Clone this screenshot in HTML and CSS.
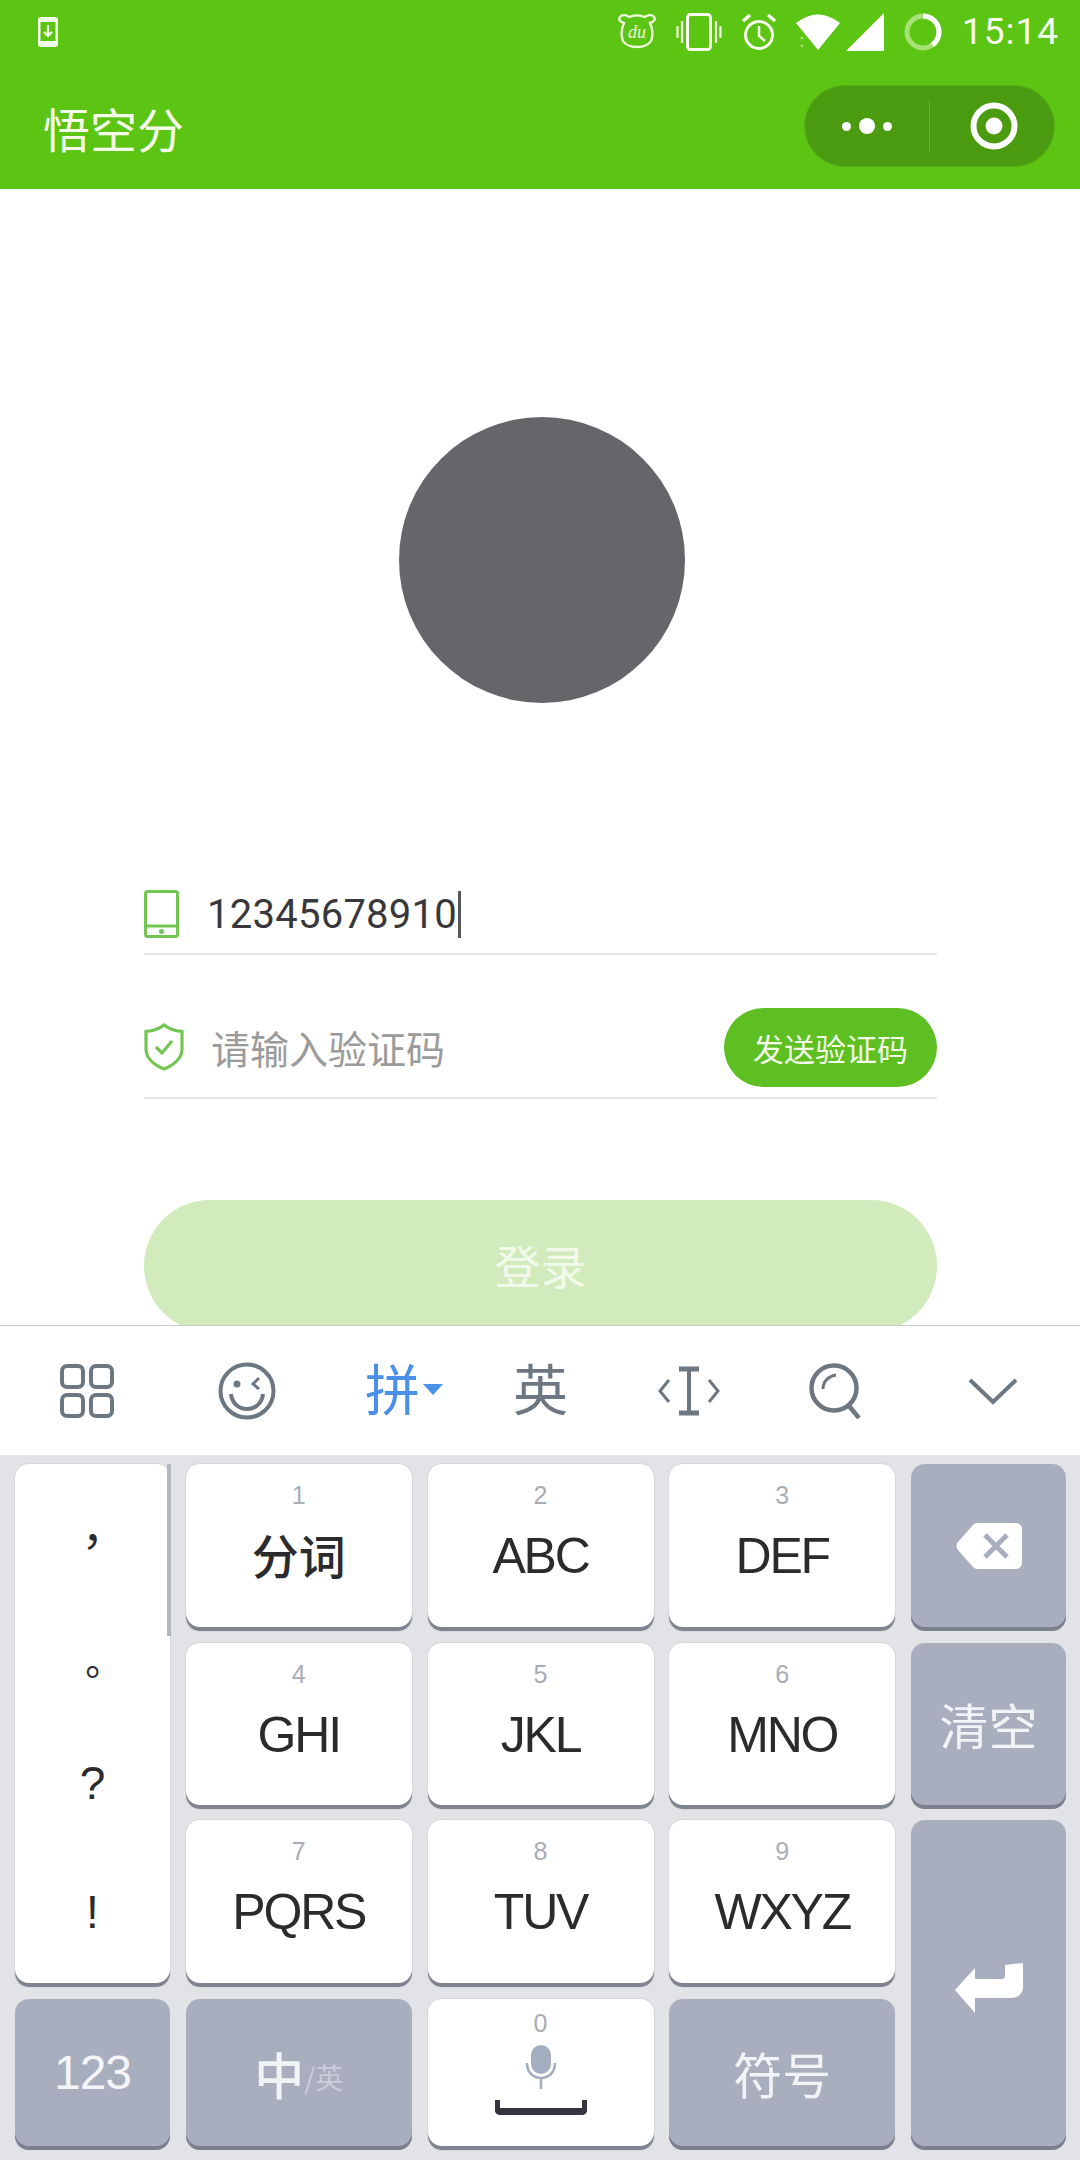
FILE: index.html
```html
<!DOCTYPE html>
<html lang="zh-CN">
<head>
  <meta charset="UTF-8" />
  <title>悟空分</title>
  <link rel="stylesheet" href="styles.css">
</head>
<body>
<div class="page">

  <!-- 顶部 -->
  <header class="header">
    <div class="status">
      <svg class="ic-download" width="20" height="30" viewBox="0 0 20 30">
        <rect width="20" height="30" rx="3" fill="#f4fbe9"/>
        <rect x="2.5" y="5" width="15" height="19" fill="#5cc412"/>
        <path d="M10 8v11M6 15l4 4 4-4" fill="none" stroke="#f4fbe9" stroke-width="2.2"/>
      </svg>
      <div class="status-right">
        <svg class="ic-du" width="40" height="36" viewBox="0 0 40 36">
          <path d="M7 10C3 9 1 6 3 4c2-3 7-2 9 0 5-2 11-2 16 0 2-2 7-3 9 0 2 2 0 5-4 6 3 6 3 14 1 18-3 5-9 6-14 6s-11-1-14-6C4 24 4 16 7 10z" fill="none" stroke="#eefadd" stroke-width="2.4"/>
          <text x="20" y="25" class="du-text">du</text>
        </svg>
        <svg class="ic-vibrate" width="46" height="38" viewBox="0 0 46 38">
          <rect x="11.500" y="1.500" width="23" height="35" rx="3" fill="none" stroke="#f6fcee" stroke-width="3"/>
          <path d="M1.500 13v12M6 8v22M40 8v22M44.500 13v12" stroke="#f0fae0" stroke-width="2.200"/>
        </svg>
        <svg class="ic-alarm" width="38" height="38" viewBox="0 0 38 38">
          <circle cx="19" cy="22" r="13.500" fill="none" stroke="#f6fcee" stroke-width="3"/>
          <path d="M19 13v10l6 5" fill="none" stroke="#f6fcee" stroke-width="2.500"/>
          <path d="M3 8l7-6M35 8l-7-6" stroke="#f6fcee" stroke-width="3.500"/>
        </svg>
        <svg class="ic-wifi" width="46" height="38" viewBox="0 0 46 38">
          <path d="M1 10Q23-7 45 10L23 37z" fill="#fff"/>
          <path d="M5 26l2-3 2 3zM5 32l2 3 2-3z" fill="#a9e07c"/>
        </svg>
        <svg class="ic-signal" width="38" height="38" viewBox="0 0 38 38">
          <path d="M0 38L38 0v38z" fill="#fff"/>
        </svg>
        <svg class="ic-ring" width="38" height="38" viewBox="0 0 38 38">
          <circle cx="19" cy="19" r="16" fill="none" stroke="#a6e076" stroke-width="5"/>
          <path d="M19 3a16 16 0 0 1 9.400 28.900" fill="none" stroke="#fff" stroke-width="5"/>
        </svg>
        <span class="time">15:14</span>
      </div>
    </div>
    <div class="nav">
      <span class="title">悟空分</span>
      <div class="capsule">
        <div class="capsule-left">
          <i class="dot"></i><i class="dot big"></i><i class="dot"></i>
        </div>
        <div class="capsule-right">
          <svg width="48" height="48" viewBox="0 0 48 48">
            <circle cx="24" cy="24" r="20.500" fill="none" stroke="#fff" stroke-width="6"/>
            <circle cx="24" cy="24" r="8.500" fill="#fff"/>
          </svg>
        </div>
      </div>
    </div>
  </header>

  <!-- 登录表单 -->
  <main class="main">
    <div class="avatar"></div>
    <div class="form">
      <div class="row row-phone">
        <svg class="row-icon" width="36" height="48" viewBox="0 0 36 48">
          <rect x="1.500" y="1.500" width="32" height="45" rx="2" fill="none" stroke="#72c551" stroke-width="3"/>
          <path d="M2 36h31" stroke="#72c551" stroke-width="3"/>
          <circle cx="17.500" cy="41.500" r="2.500" fill="#72c551"/>
        </svg>
        <span class="phone">12345678910</span><i class="caret"></i>
      </div>
      <div class="row row-code">
        <svg class="row-icon" width="40" height="48" viewBox="0 0 40 48">
          <path d="M20 2c5 4 11 6 18 6.500V26c0 9-8 16-18 20C10 42 2 35 2 26V8.500C9 8 15 6 20 2z" fill="none" stroke="#72c551" stroke-width="3.200"/>
          <path d="M12 24l6 6 10-12" fill="none" stroke="#72c551" stroke-width="3.200"/>
        </svg>
        <span class="placeholder">请输入验证码</span>
        <button class="send">发送验证码</button>
      </div>
      <button class="login">登录</button>
    </div>
  </main>

  <!-- 输入法工具栏 -->
  <div class="toolbar">
    <svg class="tb-grid" width="54" height="54" viewBox="0 0 54 54" fill="none" stroke="#6d7782" stroke-width="4">
      <rect x="2" y="2" width="21" height="21" rx="5"/><rect x="31" y="2" width="21" height="21" rx="5"/>
      <rect x="2" y="31" width="21" height="21" rx="5"/><rect x="31" y="31" width="21" height="21" rx="5"/>
    </svg>
    <svg class="tb-smile" width="58" height="58" viewBox="0 0 58 58" fill="none" stroke="#6d7782" stroke-width="4">
      <circle cx="29" cy="29" r="26.500"/>
      <circle cx="19" cy="22" r="3.500" fill="#6d7782" stroke="none"/>
      <path d="M41 16l-6 6 6 5" stroke-width="3"/>
      <path d="M13 32c2 20 30 20 32 0"/>
    </svg>
    <span class="tb-pin">拼<i class="tb-arrow"></i></span>
    <span class="tb-ying">英</span>
    <svg class="tb-cursor" width="62" height="50" viewBox="0 0 62 50" fill="none" stroke="#6d7782">
      <path d="M11 14L2 25l9 11M51 14l9 11-9 11" stroke-width="3"/>
      <path d="M21 3h20M21 47h20" stroke-width="5"/>
      <path d="M31 3v44" stroke-width="4"/>
    </svg>
    <svg class="tb-search" width="54" height="56" viewBox="0 0 54 56" fill="none" stroke="#6d7782" stroke-width="4.500">
      <circle cx="25" cy="25" r="22.500"/>
      <path d="M40 43l10 12"/>
      <path d="M14 26c0-8 6-13 13-14" stroke-width="3"/>
    </svg>
    <svg class="tb-down" width="50" height="28" viewBox="0 0 50 28" fill="none" stroke="#6d7782" stroke-width="4">
      <path d="M2 3l23 22L48 3"/>
    </svg>
  </div>

  <!-- 九宫格键盘 -->
  <div class="keyboard">
    <div class="key punct">
      <span class="p-comma">，</span><span class="p-stop">。</span><span class="latin p-ask">?</span><span class="latin">!</span>
      <i class="scroll"></i>
    </div>
    <div class="key"><span class="num">1</span><span class="label cn">分词</span></div>
    <div class="key"><span class="num">2</span><span class="label">ABC</span></div>
    <div class="key"><span class="num">3</span><span class="label">DEF</span></div>
    <div class="key gray">
      <svg width="66" height="46" viewBox="0 0 66 46">
        <path d="M21 0h39a6 6 0 0 1 6 6v34a6 6 0 0 1-6 6H21a6 6 0 0 1-4-2L2 27a6 6 0 0 1 0-8L17 2a6 6 0 0 1 4-2z" fill="#fff"/>
        <path d="M29 12l22 22M51 12L29 34" stroke="#a9aebf" stroke-width="5"/>
      </svg>
    </div>

    <div class="key"><span class="num">4</span><span class="label">GHI</span></div>
    <div class="key"><span class="num">5</span><span class="label">JKL</span></div>
    <div class="key"><span class="num">6</span><span class="label">MNO</span></div>
    <div class="key gray"><span class="gray-text">清空</span></div>

    <div class="key"><span class="num">7</span><span class="label">PQRS</span></div>
    <div class="key"><span class="num">8</span><span class="label">TUV</span></div>
    <div class="key"><span class="num">9</span><span class="label">WXYZ</span></div>
    <div class="key gray enter">
      <svg width="68" height="50" viewBox="0 0 68 50">
        <path d="M68 0v24a11 11 0 0 1-11 11H20v15L0 27 20 5v11h27a3 3 0 0 0 3-3V2z" fill="#fff"/>
      </svg>
    </div>

    <div class="key gray"><span class="num-123">123</span></div>
    <div class="key gray"><span class="gray-text zh">中</span><span class="en">/英</span></div>
    <div class="key space">
      <span class="num zero">0</span>
      <svg class="mic" width="32" height="44" viewBox="0 0 32 44">
        <rect x="6" y="0" width="20" height="29" rx="10" fill="#a2adc0"/>
        <path d="M2 18c0 20 28 20 28 0M16 33v11" fill="none" stroke="#a2adc0" stroke-width="2.500"/>
      </svg>
      <i class="spacebar"></i>
    </div>
    <div class="key gray"><span class="gray-text">符号</span></div>
  </div>

</div>
</body>
</html>
```

FILE: styles.css
```css
* {
  box-sizing: border-box;
}

body {
  margin: 0;
  font-family: "Noto Sans CJK SC", "Liberation Sans", sans-serif;
  background: #fff;
}

.page {
  width: 1080px;
  height: 2160px;
  display: flex;
  flex-direction: column;
  overflow: hidden;
}

/* Header */
.header {
  height: 189px;
  background-color: #5cc412;
  color: #fff;
  flex-shrink: 0;
}

.status {
  height: 60px;
  padding: 13px 21px 0 38px;
  display: flex;
  justify-content: space-between;
  align-items: flex-start;
}

.ic-download {
  margin-top: 4px;
}

.status-right {
  display: flex;
  align-items: flex-start;
}

.ic-vibrate { margin-left: 19px; }
.ic-alarm { margin-left: 18px; }
.ic-wifi { margin-left: 17px; }
.ic-signal { margin-left: 5px; }
.ic-ring { margin-left: 20px; }

.du-text {
  font-family: "Liberation Serif", serif;
  font-style: italic;
  font-size: 18px;
  fill: #eefadd;
  text-anchor: middle;
}

.time {
  margin-left: 20px;
  font-family: Roboto, sans-serif;
  font-size: 37px;
  line-height: 38px;
  letter-spacing: 1px;
  color: #f6fcee;
}

.nav {
  height: 129px;
  padding: 25px 25px 0 43px;
  display: flex;
  justify-content: space-between;
  align-items: flex-start;
}

.title {
  font-size: 47px;
  line-height: 86px;
  color: #f4fbe9;
}

.capsule {
  width: 251px;
  height: 82px;
  border-radius: 41px;
  background-color: #4a9b10;
  border: 1px solid #56ad17;
  display: flex;
  align-items: center;
}

.capsule-left {
  width: 125px;
  height: 52px;
  border-right: 1px solid #6ab334;
  display: flex;
  align-items: center;
  justify-content: center;
  gap: 8px;
}

.dot {
  width: 9px;
  height: 9px;
  border-radius: 50%;
  background: #fff;
}

.dot.big {
  width: 16px;
  height: 16px;
}

.capsule-right {
  flex: 1;
  display: flex;
  justify-content: center;
  padding-left: 4px;
}

/* Form */
.main {
  height: 1136px;
  overflow: hidden;
  flex-shrink: 0;
  padding-top: 228px;
}

.avatar {
  width: 286px;
  height: 286px;
  margin-left: 399px;
  border-radius: 50%;
  background-color: #666569;
}

.form {
  margin: 172px 143px 0 144px;
}

.row {
  display: flex;
  align-items: center;
  border-bottom: 2px solid #e6e6e8;
}

.row-phone {
  height: 80px;
}

.row-code {
  height: 144px;
  padding: 53px 0 11px;
}

.phone {
  margin-left: 27px;
  font-family: Roboto, sans-serif;
  font-size: 40px;
  letter-spacing: 0.25px;
  color: #38383c;
}

.caret {
  width: 3px;
  height: 47px;
  background-color: #55555a;
  margin-left: 1px;
}

.placeholder {
  margin-left: 27px;
  font-size: 39px;
  color: #9b9b9b;
  flex: 1;
}

.send {
  width: 213px;
  height: 79px;
  border: none;
  border-radius: 40px;
  background-color: #5dbf21;
  color: #f2fae8;
  font-family: inherit;
  font-size: 31px;
  padding: 0;
}

.login {
  display: block;
  width: 100%;
  height: 132px;
  margin-top: 101px;
  border: none;
  border-radius: 66px;
  background-color: #d1ebbc;
  color: #f1f9ea;
  font-family: inherit;
  font-size: 46px;
  padding: 0 0 5px;
}

/* Toolbar */
.toolbar {
  height: 130px;
  flex-shrink: 0;
  border-top: 1px solid #c9c9c9;
  background: #fff;
  display: flex;
  align-items: center;
}

.tb-grid { margin-left: 60px; }
.tb-smile { margin-left: 104px; }
.tb-pin { margin-left: 89px; }
.tb-ying { margin-left: 70px; }
.tb-cursor { margin-left: 90px; }
.tb-search { margin-left: 89px; }
.tb-down { margin-left: 105px; }

.tb-pin,
.tb-ying {
  font-size: 55px;
  line-height: 60px;
  margin-top: -9px;
}

.tb-pin {
  width: 78px;
  color: #4a8fe8;
  display: flex;
  align-items: center;
}

.tb-arrow {
  width: 0;
  height: 0;
  margin: 6px 0 0 3px;
  border-top: 11px solid #4a8fe8;
  border-left: 10px solid transparent;
  border-right: 10px solid transparent;
}

.tb-ying {
  color: #6d7782;
}

/* Keyboard */
.keyboard {
  flex: 1;
  background-color: #e2e3e7;
  padding: 9px 14px 0 15px;
  display: grid;
  grid-template-columns: 155px 226px 226px 226px 155px;
  grid-template-rows: 167px 166px 167px 151px;
  column-gap: 15.75px;
  row-gap: 11.7px;
}

.key {
  position: relative;
  display: flex;
  flex-direction: column;
  align-items: center;
  padding-top: 16px;
  border-radius: 14px;
  background-color: #fff;
  box-shadow: inset 0 -4px 0 #80848f, 0 0 0 1px #d6d7db;
  font-family: "Liberation Sans", "Noto Sans CJK SC", sans-serif;
}

.num {
  font-size: 25px;
  line-height: 30px;
  color: #a9acb4;
}

.label {
  margin-top: 18px;
  font-size: 50px;
  line-height: 56px;
  letter-spacing: -2.200px;
  color: #2b2b2e;
}

.label.cn {
  font-family: "Noto Sans CJK SC", sans-serif;
  font-size: 47px;
  font-weight: 500;
  letter-spacing: 0;
  margin-top: 16px;
}

.gray {
  background-color: #a9aebf;
  box-shadow: inset 0 -4px 0 #7c808e;
  flex-direction: row;
  justify-content: center;
  padding: 0 0 4px;
  align-items: center;
}

.gray-text {
  font-family: "Noto Sans CJK SC", sans-serif;
  font-size: 49px;
  color: #f2f3f6;
}

.gray-text.zh {
  font-size: 50px;
  font-weight: 500;
}

.en {
  font-family: "Noto Sans CJK SC", sans-serif;
  font-size: 28px;
  margin-top: 8px;
  color: #c9ccd8;
}

.num-123 {
  font-size: 48px;
  letter-spacing: -1px;
  color: #f4f5f8;
}

.punct {
  grid-row: span 3;
  padding-top: 13px;
  font-size: 46px;
  color: #2b2b2e;
  font-family: "Noto Sans CJK TC", sans-serif;
}

.punct span {
  height: 123px;
  line-height: 123px;
}

.punct .p-comma {
  height: 131px;
}

.punct .p-stop {
  height: 114px;
  font-size: 38px;
}

.punct .p-ask {
  height: 129px;
}

.punct .latin {
  font-family: "Liberation Sans", sans-serif;
}

.scroll {
  position: absolute;
  top: 0;
  right: -1px;
  width: 4px;
  height: 172px;
  background-color: #b5b8c1;
}

.enter {
  grid-row: span 2;
  padding: 6px 0 0;
}

.space {
  padding-top: 9px;
}

.zero {
  line-height: 30px;
}

.mic {
  margin-top: 7px;
}

.spacebar {
  width: 92px;
  height: 15px;
  margin-top: 11px;
  border: 5px solid #33363d;
  border-top: none;
  border-bottom-width: 7px;
  border-radius: 0 0 5px 5px;
}
```
